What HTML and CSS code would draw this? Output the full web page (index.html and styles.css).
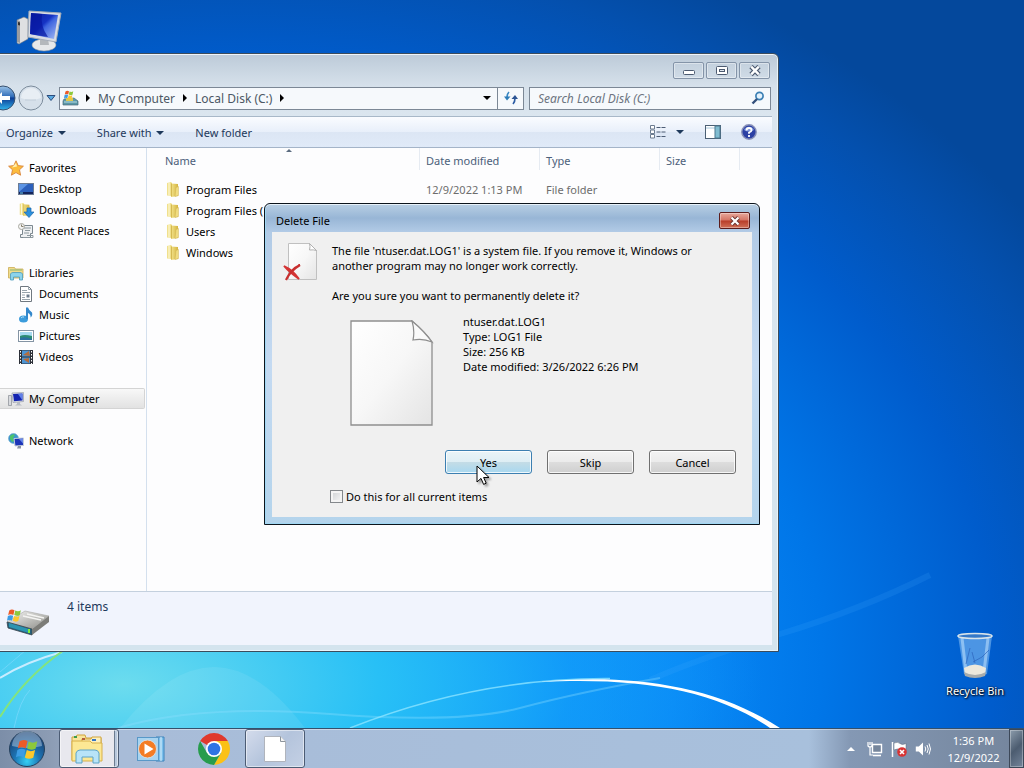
FILE: index.html
```
<!DOCTYPE html>
<html lang="en">
<head>
    <meta charset="UTF-8">
    <meta name="viewport" content="width=device-width, initial-scale=1.0">
    <title>Desktop</title>
    <link rel="stylesheet" href="styles.css">
</head>
<body>
    <!-- shared icons -->
    <svg class="defs" aria-hidden="true">
        <defs>
            <linearGradient id="screen" x1="0" y1="0" x2="1" y2="1">
                <stop offset="0" stop-color="#0a1c9c"/>
                <stop offset=".45" stop-color="#1533c4"/>
                <stop offset=".55" stop-color="#3f66e0"/>
                <stop offset="1" stop-color="#a8bdf4"/>
            </linearGradient>
            <linearGradient id="paper" x1="0" y1="0" x2="1" y2="1">
                <stop offset="0" stop-color="#ffffff"/>
                <stop offset=".5" stop-color="#f7f7f7"/>
                <stop offset="1" stop-color="#e4e4e4"/>
            </linearGradient>
            <linearGradient id="gold" x1="0" y1="0" x2="1" y2="0">
                <stop offset="0" stop-color="#f4e48c"/>
                <stop offset="1" stop-color="#d4b440"/>
            </linearGradient>
            <radialGradient id="orb" cx=".5" cy=".85" r=".8">
                <stop offset="0" stop-color="#35d0f4"/>
                <stop offset=".45" stop-color="#1c74b4"/>
                <stop offset="1" stop-color="#1b3c6c"/>
            </radialGradient>
            <linearGradient id="backBlue" x1="0" y1="0" x2="0" y2="1">
                <stop offset="0" stop-color="#9cc4e8"/>
                <stop offset=".45" stop-color="#2f6cb8"/>
                <stop offset=".5" stop-color="#0c3c94"/>
                <stop offset="1" stop-color="#30b4ec"/>
            </linearGradient>
            <linearGradient id="metal" x1="0" y1="0" x2="1" y2="1">
                <stop offset="0" stop-color="#f6f6f4"/>
                <stop offset="1" stop-color="#8c8c88"/>
            </linearGradient>
        </defs>
        <symbol id="folder" viewBox="0 0 16 16">
            <path d="M2 1.500l4-1 1 1v13l-5-.5z" fill="#f0e08c"/>
            <path d="M6 2l7 .500v12L6 15.500z" fill="url(#gold)"/>
            <path d="M11 6l2.500-1v9L10 15z" fill="#f0dc80" stroke="#c8a848" stroke-width=".4"/>
            <path d="M4 1v13" stroke="#fffbe0"/>
            <path d="M6.500 2v13" stroke="#c8a83c" stroke-width=".7"/>
        </symbol>
        <symbol id="flag" viewBox="0 0 20 18">
            <path d="M3 3q3-2.500 7-.5L8.500 9Q5 7 1.500 9z" fill="#ec5a28"/>
            <path d="M11 3q4 2 7.500-.3L17 9.300q-4 1.700-7.300-.2z" fill="#8cc83c"/>
            <path d="M1.200 10.200q3.500-2 7-.1L6.600 16.500Q3 14.800 0 16.500z" fill="#3c9ce4"/>
            <path d="M9.400 10.400q3.600 1.800 7.200 0L15 17q-4 1.800-7.300-.2z" fill="#fcc82c"/>
        </symbol>
        <symbol id="pc" viewBox="0 0 16 16">
            <path d="M.5 4.500h3v10h-3z" fill="#d8dade" stroke="#888c94" stroke-width=".7"/>
            <path d="M4 2l11.500-.5v9L5 11.500z" fill="#e4e6ea" stroke="#8890a0" stroke-width=".6"/>
            <path d="M5 3l9.500-.5v7L6 10.300z" fill="#1424b0"/>
            <path d="M10 3l4.500-.5v7z" fill="#6080e8"/>
            <path d="M9 11h3v2l2 1.500H7L9 13z" fill="#b8bcc4"/>
        </symbol>
        <symbol id="drive" viewBox="0 0 46 34">
            <path d="M2 19L20 8l24 5-17 13z" fill="url(#metal)" stroke="#a8a8a4" stroke-width=".6"/>
            <path d="M2 19l25 7v6L3 25z" fill="#24607c" stroke="#38444c" stroke-width=".8"/>
            <path d="M27 26l17-13v6L27 32z" fill="#7c7c78"/>
            <path d="M4 20l20 6v4L4 24z" fill="#2c94b0"/>
            <path d="M24 26v4" stroke="#7cf03c" stroke-width="2"/>
            <path d="M18 13l18 4M22 11l17 4" stroke="#f4f4f2" stroke-width="1.500"/>
            <use href="#flag" x="2" y="5" width="15" height="14"/>
        </symbol>
        <symbol id="sheet" viewBox="0 0 84 107">
            <path d="M1 1h61q14 12 20 21v83H1z" fill="url(#paper)" stroke="#8e8e8e" stroke-width="1.300"/>
            <path d="M62 1q3 10 1 19 10-2 19 2-8-11-20-21z" fill="#fafafa" stroke="#8e8e8e" stroke-width="1.200"/>
        </symbol>
    </svg>

    <div class="screen">
        <main class="desktop">
            <svg class="wallpaper" viewBox="0 0 1024 728" preserveAspectRatio="none" aria-hidden="true">
                <path d="M120 728Q170 666 215 667T305 728z" fill="#ffffff" opacity=".08"/>
                <path d="M118 728Q200 704 330 714T520 708T660 678" fill="none" stroke="#8fe0ff" stroke-width="2" opacity=".35"/>
                <path d="M930 575Q860 610 780 634T650 680" fill="none" stroke="#4ab0ff" stroke-width="6" opacity=".15"/>
                <path d="M350 728C440 692 530 678 610 678.500" fill="none" stroke="#8ce4ff" stroke-width="1.500" opacity=".8"/>
                <path d="M540 682C620 674 710 682 780 728H770C715 690 640 677 540 682z" fill="#ffffff"/>
                <path d="M0 678Q25 662 62 652" fill="none" stroke="#c8ecff" stroke-width="2"/>
                <path d="M0 717Q24 678 64 650" fill="none" stroke="#84e47c" stroke-width="2"/>
                <path d="M0 672L26 650M14 728Q20 700 30 690" fill="none" stroke="#7cd8fc" opacity=".7"/>
            </svg>

            <a class="shortcut computer" href="#" aria-label="Computer">
                <svg width="48" height="44" viewBox="0 0 48 44">
                    <path d="M1 10l7-3 4 2v20l-9 5-2-1z" fill="#dfe0e2" stroke="#707884" stroke-width=".6"/>
                    <path d="M1 10l3 1v22l-3-1z" fill="#9a9ca0"/>
                    <path d="M2 12l2 .5v3L2 15z" fill="#333"/>
                    <ellipse cx="28" cy="35" rx="12" ry="6" fill="#e6e8ea" stroke="#9098a0" stroke-width=".6"/>
                    <path d="M24 29h8l1 6h-9z" fill="#b4b8bc"/>
                    <path d="M13 1l32 2-5 29-28-5z" fill="#d8dce4" stroke="#a4acb8"/>
                    <path d="M15 3l27 2-4 24-24-5z" fill="url(#screen)"/>
                    <path d="M15 3l11 1q-2 12 6 23l-18-3z" fill="#0616a0" opacity=".7"/>
                </svg>
            </a>

            <a class="shortcut bin" href="#">
                <svg width="38" height="48" viewBox="0 0 38 48">
                    <path d="M2 4h34l-5 38q-12 5-23 0z" fill="#6cacec" opacity=".7"/>
                    <path d="M6 6l4 34M32 6l-4 34" stroke="#b8dcfc" stroke-width="3" opacity=".6"/>
                    <path d="M8 36q11-7 22 0l-1 6q-10 3-20 0z" fill="#ece8dc"/>
                    <path d="M8 40q11 6 22 0l-1 4q-10 4-20 0z" fill="#a8acac"/>
                    <path d="M14 16l-4 16M33 18q-6 8-16 12M16 20l3 11" fill="none" stroke="#2c64bc" opacity=".7"/>
                    <ellipse cx="19" cy="4" rx="17" ry="2.500" fill="#3478c8" stroke="#d8e4ea" stroke-width="1.600"/>
                </svg>
                <span>Recycle Bin</span>
            </a>

            <!-- EXPLORER WINDOW -->
            <section class="window explorer" aria-label="Local Disk (C:)">
                <div class="caption">
                    <button class="caption-btn" aria-label="Minimize">
                        <svg width="14" height="12" viewBox="0 0 14 12"><rect x="1.500" y="5.500" width="11" height="4" rx="1" fill="#fff" stroke="#4c5a70"/></svg>
                    </button>
                    <button class="caption-btn" aria-label="Maximize">
                        <svg width="14" height="12" viewBox="0 0 14 12"><rect x="1.500" y="1.500" width="11" height="8" rx="1" fill="#fff" stroke="#4c5a70"/><rect x="4.500" y="4.500" width="5" height="2" fill="#dfe6ee" stroke="#4c5a70"/></svg>
                    </button>
                    <button class="caption-btn" aria-label="Close">
                        <svg width="14" height="12" viewBox="0 0 14 12"><path d="M3 1.500l8 8M11 1.500l-8 8" stroke="#4c5a70" stroke-width="4.600"/><path d="M3.200 1.700l7.600 7.600M10.800 1.700l-7.600 7.600" stroke="#fff" stroke-width="2.400"/></svg>
                    </button>
                </div>

                <div class="nav">
                    <div class="travel">
                        <button aria-label="Back">
                            <svg width="26" height="26" viewBox="0 0 26 26"><circle cx="13" cy="13" r="12" fill="url(#backBlue)" stroke="#39516f"/><path d="M6 13l6-6v4h8v4h-8v4z" fill="#fff"/></svg>
                        </button>
                        <button aria-label="Forward">
                            <svg width="26" height="26" viewBox="0 0 26 26"><circle cx="13" cy="13" r="12" fill="#d6e0ea" stroke="#7c8c9c"/><path d="M3 13a10 10 0 0 1 20 0q-10 4-20 0z" fill="#e8eef4"/><path d="M7 15h11" stroke="#c0ccd8"/></svg>
                        </button>
                        <button aria-label="Recent pages">
                            <svg width="10" height="8" viewBox="0 0 10 8"><path d="M1 1.500h8L5 6.500z" fill="#58a8e0" stroke="#2c4c7c"/></svg>
                        </button>
                    </div>
                    <div class="address">
                        <svg class="address-icon" width="17" height="18" viewBox="0 0 17 18">
                            <path d="M2 10l10-1 4 3v4H1v-4z" fill="#5c98a8" stroke="#4c6878" stroke-width=".7"/>
                            <path d="M4 9h7v3H4z" fill="#e0c84c"/><path d="M2 13h13" stroke="#b8dce4"/>
                            <use href="#flag" x="2" y="1" width="10" height="9"/>
                        </svg>
                        <span class="arrow"></span>
                        <a href="#">My Computer</a>
                        <span class="arrow"></span>
                        <a href="#">Local Disk (C:)</a>
                        <span class="arrow"></span>
                        <button class="address-drop" aria-label="Previous locations"><span class="down"></span></button>
                        <button class="refresh" aria-label="Refresh">
                            <svg width="16" height="14" viewBox="0 0 16 14"><path d="M6 1Q4 3 4 6" fill="none" stroke="#3888c4" stroke-width="1.700"/><path d="M1 5.500h6.500L4 9.500z" fill="#2c7cb8"/><path d="M10 13q2-2 2-6" fill="none" stroke="#2c5ca4" stroke-width="1.700"/><path d="M8.500 8h6.500L12 4z" fill="#2c5494"/></svg>
                        </button>
                    </div>
                    <div class="search">
                        <input type="text" placeholder="Search Local Disk (C:)" aria-label="Search Local Disk (C:)">
                        <svg width="14" height="14" viewBox="0 0 14 14"><circle cx="8.500" cy="5" r="3.600" fill="#e4f2fc" stroke="#3c80b4" stroke-width="1.700"/><path d="M6 8l-4.500 4.500" stroke="#34507c" stroke-width="2.400"/></svg>
                    </div>
                </div>

                <div class="toolbar">
                    <button class="tool">Organize <span class="down"></span></button>
                    <button class="tool">Share with <span class="down"></span></button>
                    <button class="tool">New folder</button>
                    <div class="tool-icons">
                        <button aria-label="Change your view">
                            <svg width="16" height="14" viewBox="0 0 16 14"><path d="M.5.500h4v3.500h-4zM.5 5h4v3.500h-4zM.5 9.500h4V13h-4z" fill="#fff" stroke="#6c7c90"/><path d="M6.500 2.500h4M11.500 2.500h4M6.500 7h4M11.500 7h4M6.500 11.500h4M11.500 11.500h4" stroke="#4c5c74"/></svg>
                        </button>
                        <button aria-label="More view options"><span class="down"></span></button>
                        <button class="preview" aria-label="Show the preview pane">
                            <svg width="16" height="14" viewBox="0 0 16 14"><rect x=".5" y=".5" width="15" height="13" fill="#fff" stroke="#4c6074"/><path d="M1 3h14" stroke="#a8c8dc"/><rect x="10" y="1" width="5" height="12" fill="#80bcd0" stroke="#4c7890"/></svg>
                        </button>
                        <button aria-label="Get help">
                            <svg width="16" height="16" viewBox="0 0 16 16"><circle cx="8" cy="8" r="7.200" fill="#2c40a4" stroke="#8890b8" stroke-width="1.400"/><path d="M3 6a5.500 5.500 0 0 1 10 0q-5 3-10 0" fill="#7c94dc"/><path d="M5.500 6.500q0-2.500 2.500-2.500t2.500 2.200Q10.500 7.500 8 8.500v1.300M8 11v2" fill="none" stroke="#fff" stroke-width="1.800"/></svg>
                        </button>
                    </div>
                </div>

                <div class="panes">
                    <nav class="sidebar">
                        <ul>
                            <li><a href="#"><svg width="16" height="16" viewBox="0 0 16 16"><path d="M8 .8l2.200 4.800 5.200.6-3.900 3.600 1.100 5.400L8 12.600l-4.600 2.600 1.100-5.400L.6 6.200l5.200-.6z" fill="#fcbc3c" stroke="#d8843c" stroke-width=".9"/><path d="M8 3l1 3.500-5 1z" fill="#fff0b0"/></svg>Favorites</a>
                                <ul>
                                    <li><a href="#"><svg width="16" height="16" viewBox="0 0 16 16"><rect x=".5" y="2.500" width="15" height="11" fill="#2c60bc" stroke="#6c7c94"/><path d="M1 3h9l-9 8z" fill="#5c94e4"/><path d="M1 12h14" stroke="#14245c" stroke-width="2"/><path d="M2 12h3" stroke="#6cd0f4"/></svg>Desktop</a></li>
                                    <li><a href="#"><svg width="16" height="16" viewBox="0 0 16 16"><use href="#folder" width="14" height="15"/><path d="M9 6h4v4h3l-5 5.500L6 10h3z" fill="#2c90dc" stroke="#1c68ac" stroke-width=".7"/></svg>Downloads</a></li>
                                    <li><a href="#"><svg width="16" height="16" viewBox="0 0 16 16"><path d="M4.500 2.500h10v8h-2v4H2.500v-3h2z" fill="#eef0f2" stroke="#7c8890"/><path d="M6 5h7M7 7.500h5M6 10h5M9 12.500h6v2H5" fill="none" stroke="#8c989e"/><circle cx="3.500" cy="3.500" r="3" fill="#f4f4f4" stroke="#a8a8a0"/><path d="M3.500 1.500v2h2" fill="none" stroke="#88806c"/></svg>Recent Places</a></li>
                                </ul>
                            </li>
                            <li><a href="#"><svg width="16" height="16" viewBox="0 0 16 16"><path d="M.5 2.500h6l1 1.500h7.500v9H.5z" fill="#f0dc8c" stroke="#ccac54" stroke-width=".8"/><path d="M2 5h12" stroke="#88b474"/><path d="M2.500 15V9Q3 7.500 5 7.500h7q2 0 2.500 1.500v6h-3v-3h-6v3z" fill="#8cd4ec" stroke="#4c9cbc" stroke-width=".8"/></svg>Libraries</a>
                                <ul>
                                    <li><a href="#"><svg width="16" height="16" viewBox="0 0 16 16"><path d="M2.500.500h8l3 3v12h-11z" fill="#fff" stroke="#707880"/><path d="M10.500.500v3h3M4 4.500h5M4 6.500h8M4 9h3M4 11.500h3M4 13.500h8" fill="none" stroke="#98a4ac"/><path d="M8.500 8.500h3v3h-3z" fill="#6c7c8c"/></svg>Documents</a></li>
                                    <li><a href="#"><svg width="16" height="16" viewBox="0 0 16 16"><ellipse cx="5.500" cy="12" rx="4.500" ry="3.500" fill="#3c9cdc"/><path d="M8 .500h2q1 3 4 5 1 3-1.500 5 .5-3-2.500-4.500v6H8z" fill="#3488cc"/><path d="M3 11q1-1.500 3-1" fill="none" stroke="#b4e0f8"/></svg>Music</a></li>
                                    <li><a href="#"><svg width="16" height="16" viewBox="0 0 16 16"><rect x=".5" y="2.500" width="15" height="11" fill="#fff" stroke="#8494a4"/><rect x="2" y="4" width="12" height="8" fill="#a8daf0"/><path d="M2 8q4-2 12 0v4H2z" fill="#2c8c74"/><path d="M2 10q6-2 12 1v1H2z" fill="#2c70a0"/></svg>Pictures</a></li>
                                    <li><a href="#"><svg width="16" height="16" viewBox="0 0 16 16"><path d="M1 1h14v14H1z" fill="#2c3038"/><path d="M4 1.500h8v6H4zM4 8.500h8v6H4z" fill="#4c94d4"/><path d="M5 6l6-4 1 5zM5 10l6 4V9z" fill="#b46c3c"/><path d="M2.500 2v13M13.500 2v13" stroke="#fff" stroke-dasharray="1.500 1.500"/></svg>Videos</a></li>
                                </ul>
                            </li>
                            <li><a class="selected" href="#"><svg width="16" height="16"><use href="#pc"/></svg>My Computer</a></li>
                            <li><a href="#"><svg width="16" height="16" viewBox="0 0 16 16"><circle cx="5.500" cy="5.500" r="5" fill="#3c94cc" stroke="#6cacd0" stroke-width=".6"/><path d="M2 3q3-3 5-1L5 5l1 3-2 1-2-3z" fill="#4cc46c"/><path d="M6 5.500l9.500-.5v7.500L7 13z" fill="#1c34b8" stroke="#c4ccd8"/><path d="M11 6l4-.5v5z" fill="#6888e8"/><path d="M10 13h3v2.500H9z" fill="#8c94a4"/></svg>Network</a></li>
                        </ul>
                    </nav>
                    <div class="files">
                        <table>
                            <thead>
                                <tr>
                                    <th class="col-name" scope="col">Name<span class="sort"></span></th>
                                    <th class="col-date" scope="col">Date modified</th>
                                    <th class="col-type" scope="col">Type</th>
                                    <th class="col-size" scope="col">Size</th>
                                    <td></td>
                                </tr>
                            </thead>
                            <tbody>
                                <tr><td class="file-name"><svg width="16" height="17"><use href="#folder"/></svg>Program Files</td><td>12/9/2022 1:13 PM</td><td>File folder</td><td></td><td></td></tr>
                                <tr><td class="file-name"><svg width="16" height="17"><use href="#folder"/></svg>Program Files (</td><td></td><td></td><td></td><td></td></tr>
                                <tr><td class="file-name"><svg width="16" height="17"><use href="#folder"/></svg>Users</td><td></td><td></td><td></td><td></td></tr>
                                <tr><td class="file-name"><svg width="16" height="17"><use href="#folder"/></svg>Windows</td><td></td><td></td><td></td><td></td></tr>
                            </tbody>
                        </table>
                    </div>
                </div>

                <div class="details">
                    <svg width="46" height="34"><use href="#drive"/></svg>
                    <span>4 items</span>
                </div>
            </section>

            <!-- DELETE DIALOG -->
            <section class="window dialog" role="dialog" aria-labelledby="dialogTitle">
                <div class="dialog-title">
                    <h1 id="dialogTitle">Delete File</h1>
                    <button class="close-btn" aria-label="Close">
                        <svg width="14" height="12" viewBox="0 0 14 12"><path d="M3.500 2.500l7 7M10.500 2.500l-7 7" stroke="#6c3430" stroke-width="4"/><path d="M3.500 2.500l7 7M10.500 2.500l-7 7" stroke="#fff" stroke-width="2.200"/></svg>
                    </button>
                </div>
                <div class="dialog-body">
                    <svg class="dialog-icon" width="34" height="40" viewBox="0 0 34 40">
                        <path d="M5.500.500h21l7 7v29h-28z" fill="url(#paper)" stroke="#c0c0c0"/>
                        <path d="M26.500.500q1 3 0 6.500 4-.5 7 .5z" fill="#fff" stroke="#b0b0b0"/>
                        <path d="M1 23q9 4 15 13-10-7-15-13z" fill="#d43434" stroke="#d43434" stroke-width="1.800"/>
                        <path d="M17 22Q8 26 3 37 7 28 17 22z" fill="#c42c2c" stroke="#c83030" stroke-width="2.200"/>
                    </svg>
                    <div class="message">
                        <p>The file 'ntuser.dat.LOG1' is a system file. If you remove it, Windows or another program may no longer work correctly.</p>
                        <p>Are you sure you want to permanently delete it?</p>
                        <div class="file-info">
                            <svg width="84" height="107"><use href="#sheet"/></svg>
                            <ul>
                                <li>ntuser.dat.LOG1</li>
                                <li>Type: LOG1 File</li>
                                <li>Size: 256 KB</li>
                                <li>Date modified: 3/26/2022 6:26 PM</li>
                            </ul>
                        </div>
                    </div>
                    <div class="actions">
                        <button class="btn active">Yes</button>
                        <button class="btn">Skip</button>
                        <button class="btn">Cancel</button>
                    </div>
                    <label class="check"><input type="checkbox">Do this for all current items</label>
                </div>
            </section>

            <svg class="cursor" width="14" height="21" viewBox="0 0 14 21" aria-hidden="true">
                <path d="M1 1v16l4-3.600 2.600 6 2.600-1.200-2.600-5.700H13z" fill="#fff" stroke="#000"/>
            </svg>
        </main>

        <!-- TASKBAR -->
        <footer class="taskbar">
            <button class="start" aria-label="Start">
                <svg width="38" height="38" viewBox="0 0 38 38"><circle cx="19" cy="19" r="17.500" fill="url(#orb)" stroke="#24405c"/><path d="M4 16a15 15 0 0 1 30 0q-15 4-30 0z" fill="#c4dcf0" opacity=".45"/><use href="#flag" x="8" y="8" width="23" height="21"/></svg>
            </button>
            <button class="task stacked" aria-label="Windows Explorer">
                <svg width="34" height="32" viewBox="0 0 34 32">
                    <path d="M2 4h4l1-2h8l1 3h15v22H2z" fill="#f8e49c" stroke="#d0a43c"/>
                    <path d="M12 6h9l1-2h9v10H12z" fill="#fcf0bc" stroke="#d0a43c"/>
                    <path d="M2 8h18l2 2h10v18H2z" fill="#fce894" stroke="#d8b048"/>
                    <path d="M4 4h3" stroke="#3c9c4c" stroke-width="2"/><path d="M12 6h3" stroke="#b45c3c" stroke-width="2"/><path d="M22 7h4" stroke="#3474c4" stroke-width="2"/>
                    <path d="M6 30V20q1-3 4-3h15q3 0 4 3v10h-6v-6H12v6z" fill="#b8e4f8" stroke="#5ca4c8"/>
                </svg>
            </button>
            <button class="task plain" aria-label="Media Player">
                <svg width="30" height="28" viewBox="0 0 30 28"><path d="M20 2h8v24h-8z" fill="#7cc0ec" stroke="#3c84bc"/><path d="M22 2v24M25 2v24" stroke="#e0f4fc"/><rect x="1.500" y="2.500" width="21" height="23" fill="#a8d4f0" stroke="#5898c8"/><circle cx="11.500" cy="14" r="9" fill="#f47c24" stroke="#d8dce0"/><path d="M8.500 8.500l9 5.500-9 5.500z" fill="#fff"/></svg>
            </button>
            <button class="task plain" aria-label="Chrome">
                <svg width="32" height="32" viewBox="0 0 32 32"><path d="M29.850 8H16l6.900 12L16 32A16 16 0 0 0 29.850 8z" fill="#fbc116"/><path d="M16 16L2.150 8A16 16 0 0 1 29.850 8H16z" fill="#e0392c"/><path d="M9.100 20L2.150 8A16 16 0 0 0 16 32l6.900-12z" fill="#279c4c"/><circle cx="16" cy="16" r="8" fill="#fff"/><circle cx="16" cy="16" r="6.300" fill="#2f74e4"/></svg>
            </button>
            <button class="task" aria-label="Delete File">
                <svg width="24" height="28" viewBox="0 0 24 28"><path d="M1.500 1.500h16l5 5v20h-21z" fill="#fff" stroke="#b0b4bc"/><path d="M17.500 1.500v5h5" fill="#f4f4f4" stroke="#8c949c"/></svg>
            </button>
            <div class="tray">
                <button aria-label="Show hidden icons"><span class="up"></span></button>
                <button aria-label="Network">
                    <svg width="16" height="16" viewBox="0 0 16 16"><path d="M5.500 3.500h9v8h-9z" fill="#76869c" stroke="#fff" stroke-width="1.400"/><path d="M6 14.500h8" stroke="#fff" stroke-width="1.600"/><path d="M1 1v4q2 2 4 0V1M3 1v3M3 6v8h3" fill="none" stroke="#fff" stroke-width="1.200"/></svg>
                </button>
                <button aria-label="Action Center">
                    <svg width="16" height="16" viewBox="0 0 16 16"><path d="M1.500 1v15" stroke="#fff" stroke-width="1.500"/><path d="M3 2q4-1.500 6 .5t6 0v7q-4 1.500-6-.5T3 9z" fill="#fff" stroke="#5c6878" stroke-width=".5"/><circle cx="11" cy="11" r="4.800" fill="#d83434"/><path d="M9 9l4 4M13 9l-4 4" stroke="#fff" stroke-width="1.600"/></svg>
                </button>
                <button aria-label="Volume">
                    <svg width="16" height="16" viewBox="0 0 16 16"><path d="M.8 5.500h3L8 1.500v13L3.800 10.500h-3z" fill="#fff"/><path d="M10 5.500q1.500 2.500 0 5M12 4q2.500 4 0 8M14 2.500q3 5.500 0 11" fill="none" stroke="#fff"/></svg>
                </button>
            </div>
            <div class="clock"><span>1:36 PM</span><span>12/9/2022</span></div>
            <button class="show-desktop" aria-label="Show desktop"></button>
        </footer>
    </div>
</body>
</html>
```
FILE: styles.css
```
* {
    box-sizing: border-box;
}

body {
    margin: 0;
    font-family: "Noto Sans", "Open Sans", sans-serif;
    font-size: 11px;
    line-height: 15px;
    color: #000;
}

button {
    margin: 0;
    padding: 0;
    border: none;
    background: none;
    font: inherit;
    color: inherit;
}

a {
    color: inherit;
    text-decoration: none;
}

ul {
    list-style: none;
    margin: 0;
    padding: 0;
}

svg {
    display: block;
    flex: none;
}

.defs {
    position: absolute;
    width: 0;
    height: 0;
}

.screen {
    display: flex;
    flex-direction: column;
    height: 100vh;
    overflow: hidden;
}

/* desktop */
.desktop {
    position: relative;
    flex: 1;
    overflow: hidden;
    background:
        radial-gradient(ellipse 640px 300px at 12% 94%, #6cdcee 0%, #28c0f6 40%, rgba(20, 160, 250, 0.6) 70%, rgba(0, 130, 240, 0) 100%),
        radial-gradient(ellipse 960px 760px at 24% 90%, #18b0fc 0%, #0888f6 45%, #0076e8 60%, #005ccc 78%, #0450ae 92%, #04489c 100%);
}

.wallpaper {
    position: absolute;
    width: 100%;
    height: 100%;
}

.shortcut {
    position: absolute;
    display: flex;
    flex-direction: column;
    align-items: center;
    gap: 3px;
    color: #fff;
    text-shadow: 1px 1px 2px #000, 0 0 2px #000;
}

.computer {
    left: 16px;
    top: 10px;
}

.bin {
    right: 12px;
    bottom: 30px;
    width: 74px;
}

.down, .up, .arrow, .sort {
    display: inline-block;
    width: 0;
    height: 0;
    border: 4px solid transparent;
}

.down {
    border-top-color: currentColor;
    border-bottom: none;
}

.up {
    border-bottom-color: #fff;
    border-top: none;
}

.arrow {
    border-left-color: #000;
    border-right: none;
}

/* explorer */
.window {
    position: absolute;
    display: flex;
    flex-direction: column;
}

.explorer {
    left: -8px;
    right: 245px;
    top: 53px;
    bottom: 76px;
    padding: 0 6px 6px 7px;
    border: 1px solid #3c4c5c;
    border-radius: 6px 6px 0 0;
    background: linear-gradient(#bccad8, #d6e1eb 32px, #dbe6ef 64px, #d4e4ee);
    box-shadow: inset 0 1px #f0f5fa, inset -1px -1px #e8f4fa;
    color: #1e395b;
}

.caption {
    display: flex;
    justify-content: flex-end;
    gap: 2px;
    height: 32px;
    padding: 8px 2px 0 0;
}

.caption-btn {
    display: flex;
    justify-content: center;
    align-items: center;
    width: 31px;
    height: 17px;
    border: 1px solid #8494a8;
    border-radius: 2px;
    box-shadow: inset 0 0 0 1px rgba(255, 255, 255, 0.4);
}

.nav {
    display: flex;
    align-items: center;
    gap: 5px;
    height: 24px;
    padding-right: 1px;
}

.travel {
    display: flex;
    align-items: center;
    gap: 2px;
    margin-left: -10px;
    width: 64px;
    flex: none;
}

.address, .search {
    display: flex;
    align-items: center;
    height: 23px;
    border: 1px solid #7c8896;
    background: #f6f9fc;
    font-size: 12px;
    color: #4c5864;
}

.address {
    flex: 1;
    gap: 8px;
    padding-left: 2px;
}

.address-icon {
    margin-right: -1px;
}

.address-drop {
    display: flex;
    align-items: center;
    margin-left: auto;
    color: #000;
}

.refresh {
    display: flex;
    justify-content: center;
    align-items: center;
    width: 26px;
    height: 21px;
    margin-left: -2px;
    border-left: 1px solid #7c8896;
}

.search {
    width: 242px;
    padding: 0 5px 0 8px;
}

.search input {
    flex: 1;
    min-width: 0;
    padding: 0;
    border: none;
    outline: none;
    background: none;
    font: inherit;
}

.search input::placeholder {
    color: #6c7480;
    font-style: italic;
    opacity: 1;
}

.toolbar {
    display: flex;
    align-items: center;
    gap: 31px;
    height: 32px;
    margin-top: 6px;
    padding: 0 15px 0 6px;
    border-top: 1px solid #a8b8c8;
    border-bottom: 1px solid #a4b4c8;
    background: linear-gradient(#fafcff, #e8effa 50%, #dce6f4 51%, #e0eaf8);
}

.tool .down {
    margin: 0 0 2px 2px;
}

.tool-icons {
    display: flex;
    align-items: center;
    gap: 10px;
    margin-left: auto;
}

.tool-icons button {
    display: flex;
}

.tool-icons .preview {
    margin: 0 10px 0 11px;
}

.panes {
    display: flex;
    flex: 1;
    min-height: 0;
    background: #fdfdfe;
}

.sidebar {
    width: 147px;
    flex: none;
    padding-top: 9px;
    border-right: 1px solid #d4e0ee;
    color: #000;
}

.sidebar > ul {
    display: grid;
    gap: 21px;
}

.sidebar a {
    display: flex;
    align-items: center;
    gap: 5px;
    height: 21px;
    margin-right: 1px;
    padding-left: 8px;
}

.sidebar ul ul a {
    padding-left: 18px;
}

.sidebar .selected {
    border: solid #d4d4d4;
    border-width: 1px 1px 1px 0;
    border-radius: 0 2px 2px 0;
    background: linear-gradient(#f8f8f8, #e2e2e2);
}

.files {
    flex: 1;
    min-width: 0;
}

.files table {
    width: 100%;
    border-collapse: collapse;
    table-layout: fixed;
    color: #6d6d6d;
}

.files thead tr {
    height: 31px;
}

.files th {
    position: relative;
    padding: 5px 6px 0;
    background: linear-gradient(#e6ebf2, #e6ebf2) right top / 1px 22px no-repeat;
    font-weight: normal;
    text-align: left;
    vertical-align: top;
    color: #4c607a;
}

.files .col-name {
    width: 273px;
    padding-left: 18px;
}

.col-date, .col-type {
    width: 120px;
}

.col-size {
    width: 80px;
}

.sort {
    position: absolute;
    left: 51%;
    top: 1px;
    border-width: 0 3px 3px;
    border-bottom-color: #5c6c80;
}

.files tbody td {
    height: 21px;
    padding: 0 6px;
    white-space: nowrap;
}

.files .file-name {
    display: flex;
    align-items: center;
    gap: 5px;
    padding-left: 18px;
    color: #000;
}

.details {
    display: flex;
    gap: 16px;
    height: 54px;
    padding: 7px 0 0 5px;
    border-top: 1px solid #c4d0de;
    background: #f1f4fd;
    font-size: 12px;
}

.details svg {
    margin-top: 4px;
}

/* delete dialog */
.dialog {
    left: 264px;
    top: 203px;
    width: 496px;
    padding: 0 7px 7px;
    border: 1px solid #0c141c;
    border-radius: 6px 6px 0 0;
    background: linear-gradient(#b8cfe4, #98b6d6 14px, #b2cbe6 28px, #c4daf2 50%, #b4d4ec);
    box-shadow: inset 0 1px #e8f2fa, inset 1px -1px #a0d8f4;
}

.dialog-title {
    display: flex;
    justify-content: space-between;
    height: 28px;
    padding: 8px 2px 0 4px;
}

.dialog-title h1 {
    margin: 1px 0 0;
    font-size: 11px;
    font-weight: normal;
}

.close-btn {
    display: flex;
    justify-content: center;
    align-items: center;
    width: 31px;
    height: 17px;
    border: 1px solid #5c1c1c;
    border-radius: 2px;
    background: linear-gradient(#e8a89c, #d47464 48%, #b83c28 52%, #d07058);
    box-shadow: inset 0 0 0 1px rgba(255, 255, 255, 0.35);
}

.dialog-body {
    display: grid;
    grid-template-columns: 34px 1fr;
    column-gap: 15px;
    padding: 11px 16px 13px 11px;
    background: #f0f0f0;
}

.message p {
    margin: 0 0 15px;
    max-width: 390px;
}

.file-info {
    display: flex;
    gap: 29px;
    margin: 17px 0 23px 18px;
}

.file-info ul {
    margin-top: -6px;
}

.actions {
    grid-column: 2;
    display: flex;
    justify-content: flex-end;
    gap: 15px;
}

.btn {
    width: 87px;
    height: 24px;
    border: 1px solid #707070;
    border-radius: 3px;
    background: linear-gradient(#f3f3f3, #ebebeb 50%, #dddddd 51%, #cfcfcf);
    box-shadow: inset 0 0 0 1px rgba(255, 255, 255, 0.8);
}

.btn.active {
    border-color: #3c7fb1;
    background: linear-gradient(#eaf4f8, #deeef4 50%, #c4dce6 51%, #a8d8f0);
}

.check {
    grid-column: 2;
    display: flex;
    align-items: center;
    gap: 3px;
    margin: 15px 0 0 -2px;
}

.check input {
    appearance: none;
    width: 13px;
    height: 13px;
    margin: 0;
    border: 1px solid #84888c;
    background: linear-gradient(135deg, #cccfd2, #f8f8f8);
    box-shadow: inset 0 0 0 2px #f4f4f4;
}

.cursor {
    position: absolute;
    left: 476px;
    top: 465px;
    filter: drop-shadow(2px 2px 1px rgba(0, 0, 0, 0.35));
}

/* taskbar */
.taskbar {
    display: flex;
    align-items: center;
    height: 40px;
    flex: none;
    border-top: 1px solid #34506c;
    background: linear-gradient(90deg, #7c8ea8, #8c9cb4 50px, #a8bcd8 120px, #a8c0dc 79%, #8498b4 83%, #74859c);
    box-shadow: inset 0 1px rgba(255, 255, 255, 0.4);
}

.start {
    margin: 0 13px 0 8px;
}

.task {
    display: flex;
    justify-content: center;
    align-items: center;
    width: 60px;
    height: 39px;
    border: 1px solid #4c5c74;
    border-radius: 3px;
    background: linear-gradient(135deg, #d4dcec, #b4c4dc 50%, #c4d0e4);
    box-shadow: inset 0 0 0 1px rgba(255, 255, 255, 0.5);
}

.task.stacked {
    padding-right: 5px;
    background: linear-gradient(90deg, #e8e8ee 54px, #6c7c90 54px, #6c7c90 55px, #b8c8dc 55px);
}

.task.plain {
    width: 63px;
    border-color: transparent;
    background: none;
    box-shadow: none;
}

.tray {
    display: flex;
    align-items: center;
    gap: 8px;
    margin: 0 7px 0 auto;
}

.tray button:first-child {
    display: flex;
    margin-right: 4px;
}

.clock {
    display: flex;
    flex-direction: column;
    width: 71px;
    line-height: 17px;
    text-align: center;
    color: #fff;
}

.show-desktop {
    width: 15px;
    height: 39px;
    border: 1px solid #3c4858;
    background: linear-gradient(135deg, #8c9cac, #4c5c70 50%, #74849a);
    box-shadow: inset 0 0 0 1px rgba(255, 255, 255, 0.3);
}
```
